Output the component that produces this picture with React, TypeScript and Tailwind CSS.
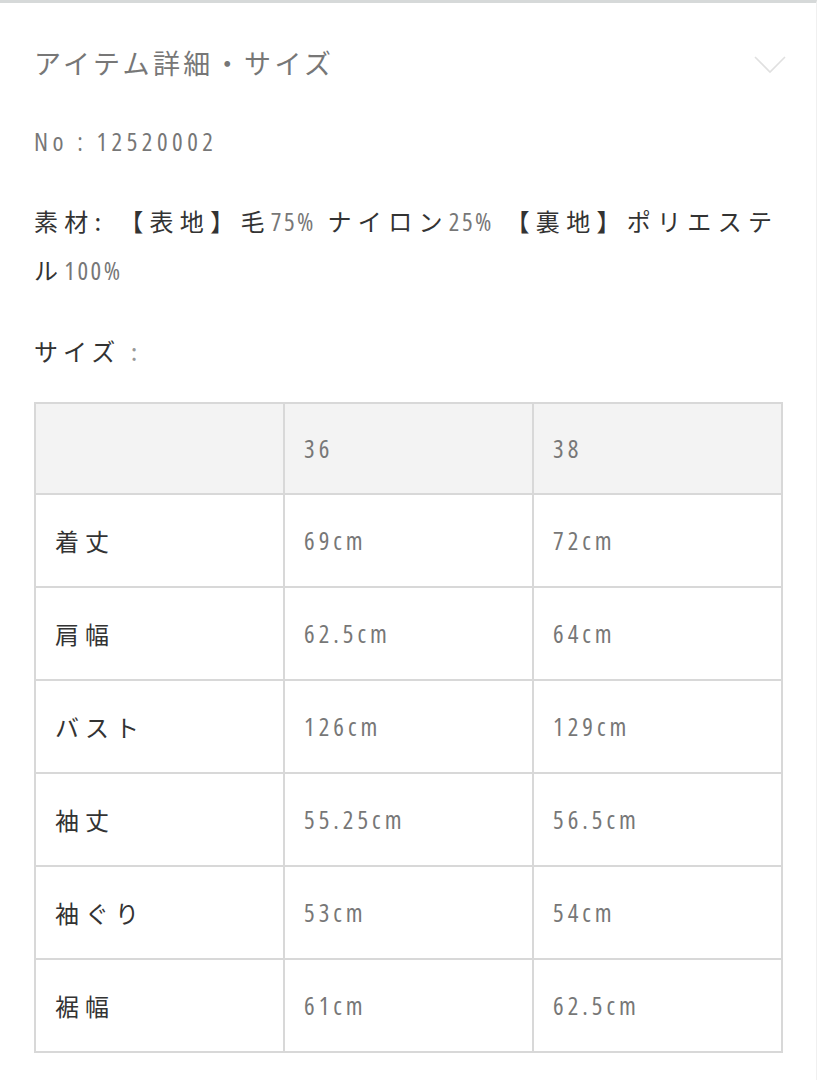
import React from 'react';

const jp = 'font-["Noto_Sans_CJK_JP","Noto_Sans",sans-serif]';
const num = 'font-["Open_Sans","Noto_Sans",sans-serif] [font-stretch:75%]';

const rows: [string, string, string][] = [
  ['着丈', '69cm', '72cm'],
  ['肩幅', '62.5cm', '64cm'],
  ['バスト', '126cm', '129cm'],
  ['袖丈', '55.25cm', '56.5cm'],
  ['袖ぐり', '53cm', '54cm'],
  ['裾幅', '61cm', '62.5cm'],
];

const N = ({ children }: { children: React.ReactNode }) => (
  <span className={`${num} text-[#777] tracking-[2.5px] text-[25px] leading-none`}>{children}</span>
);

const App = () => {
  return (
    <div className="min-h-screen bg-white border-t-[3px] border-[#d6d9d9] border-r border-r-[#f0f0f0]">
      <div className="pl-[34px] pr-[33px] pb-[29px]">
        {/* Accordion header */}
        <div className="flex items-center justify-between pt-[45px]">
          <h2 className={`${jp} text-[27px] leading-[30px] tracking-[3.4px] text-[#777]`}>
            アイテム詳細・サイズ
          </h2>
          <svg width="32" height="18" viewBox="0 0 32 18" className="mr-[-3px] mt-[3px]">
            <path d="M1 1 L16 16 L31 1" fill="none" stroke="#e0e0e0" strokeWidth="1.6" />
          </svg>
        </div>

        <p className={`${num} mt-[48px] text-[25px] leading-[30px] tracking-[4.5px] text-[#777]`}>
          No : 12520002
        </p>

        <p className={`${jp} mt-[40px] text-[24px] leading-[49px] tracking-[6.3px] text-[#333]`}>
          素材: 【表地】毛<N>75%</N> ナイロン<N>25%</N> 【裏地】ポリエステル<N>100%</N>
        </p>

        <p className={`${jp} mt-[42px] text-[24px] leading-[30px] tracking-[5px] text-[#333]`}>
          サイズ <span className="text-[#999]">:</span>
        </p>

        {/* Size table */}
        <table className="mt-[36px] w-full table-fixed border-collapse">
          <thead>
            <tr className="bg-[#f3f3f3]">
              <th className="h-[91px] border-2 border-[#d8d8d8]"></th>
              <th className={`${num} border-2 border-[#d8d8d8] px-[19px] text-left text-[25px] font-normal tracking-[4px] text-[#777]`}>
                36
              </th>
              <th className={`${num} border-2 border-[#d8d8d8] px-[19px] text-left text-[25px] font-normal tracking-[4px] text-[#777]`}>
                38
              </th>
            </tr>
          </thead>
          <tbody>
            {rows.map(([label, a, b]) => (
              <tr key={label}>
                <td className={`${jp} h-[93px] border-2 border-[#d8d8d8] px-[19px] text-[24px] tracking-[6px] text-[#333]`}>
                  {label}
                </td>
                <td className={`${num} border-2 border-[#d8d8d8] px-[19px] text-[25px] tracking-[4px] text-[#777]`}>
                  {a}
                </td>
                <td className={`${num} border-2 border-[#d8d8d8] px-[19px] text-[25px] tracking-[4px] text-[#777]`}>
                  {b}
                </td>
              </tr>
            ))}
          </tbody>
        </table>
      </div>
    </div>
  );
};

export default App;
